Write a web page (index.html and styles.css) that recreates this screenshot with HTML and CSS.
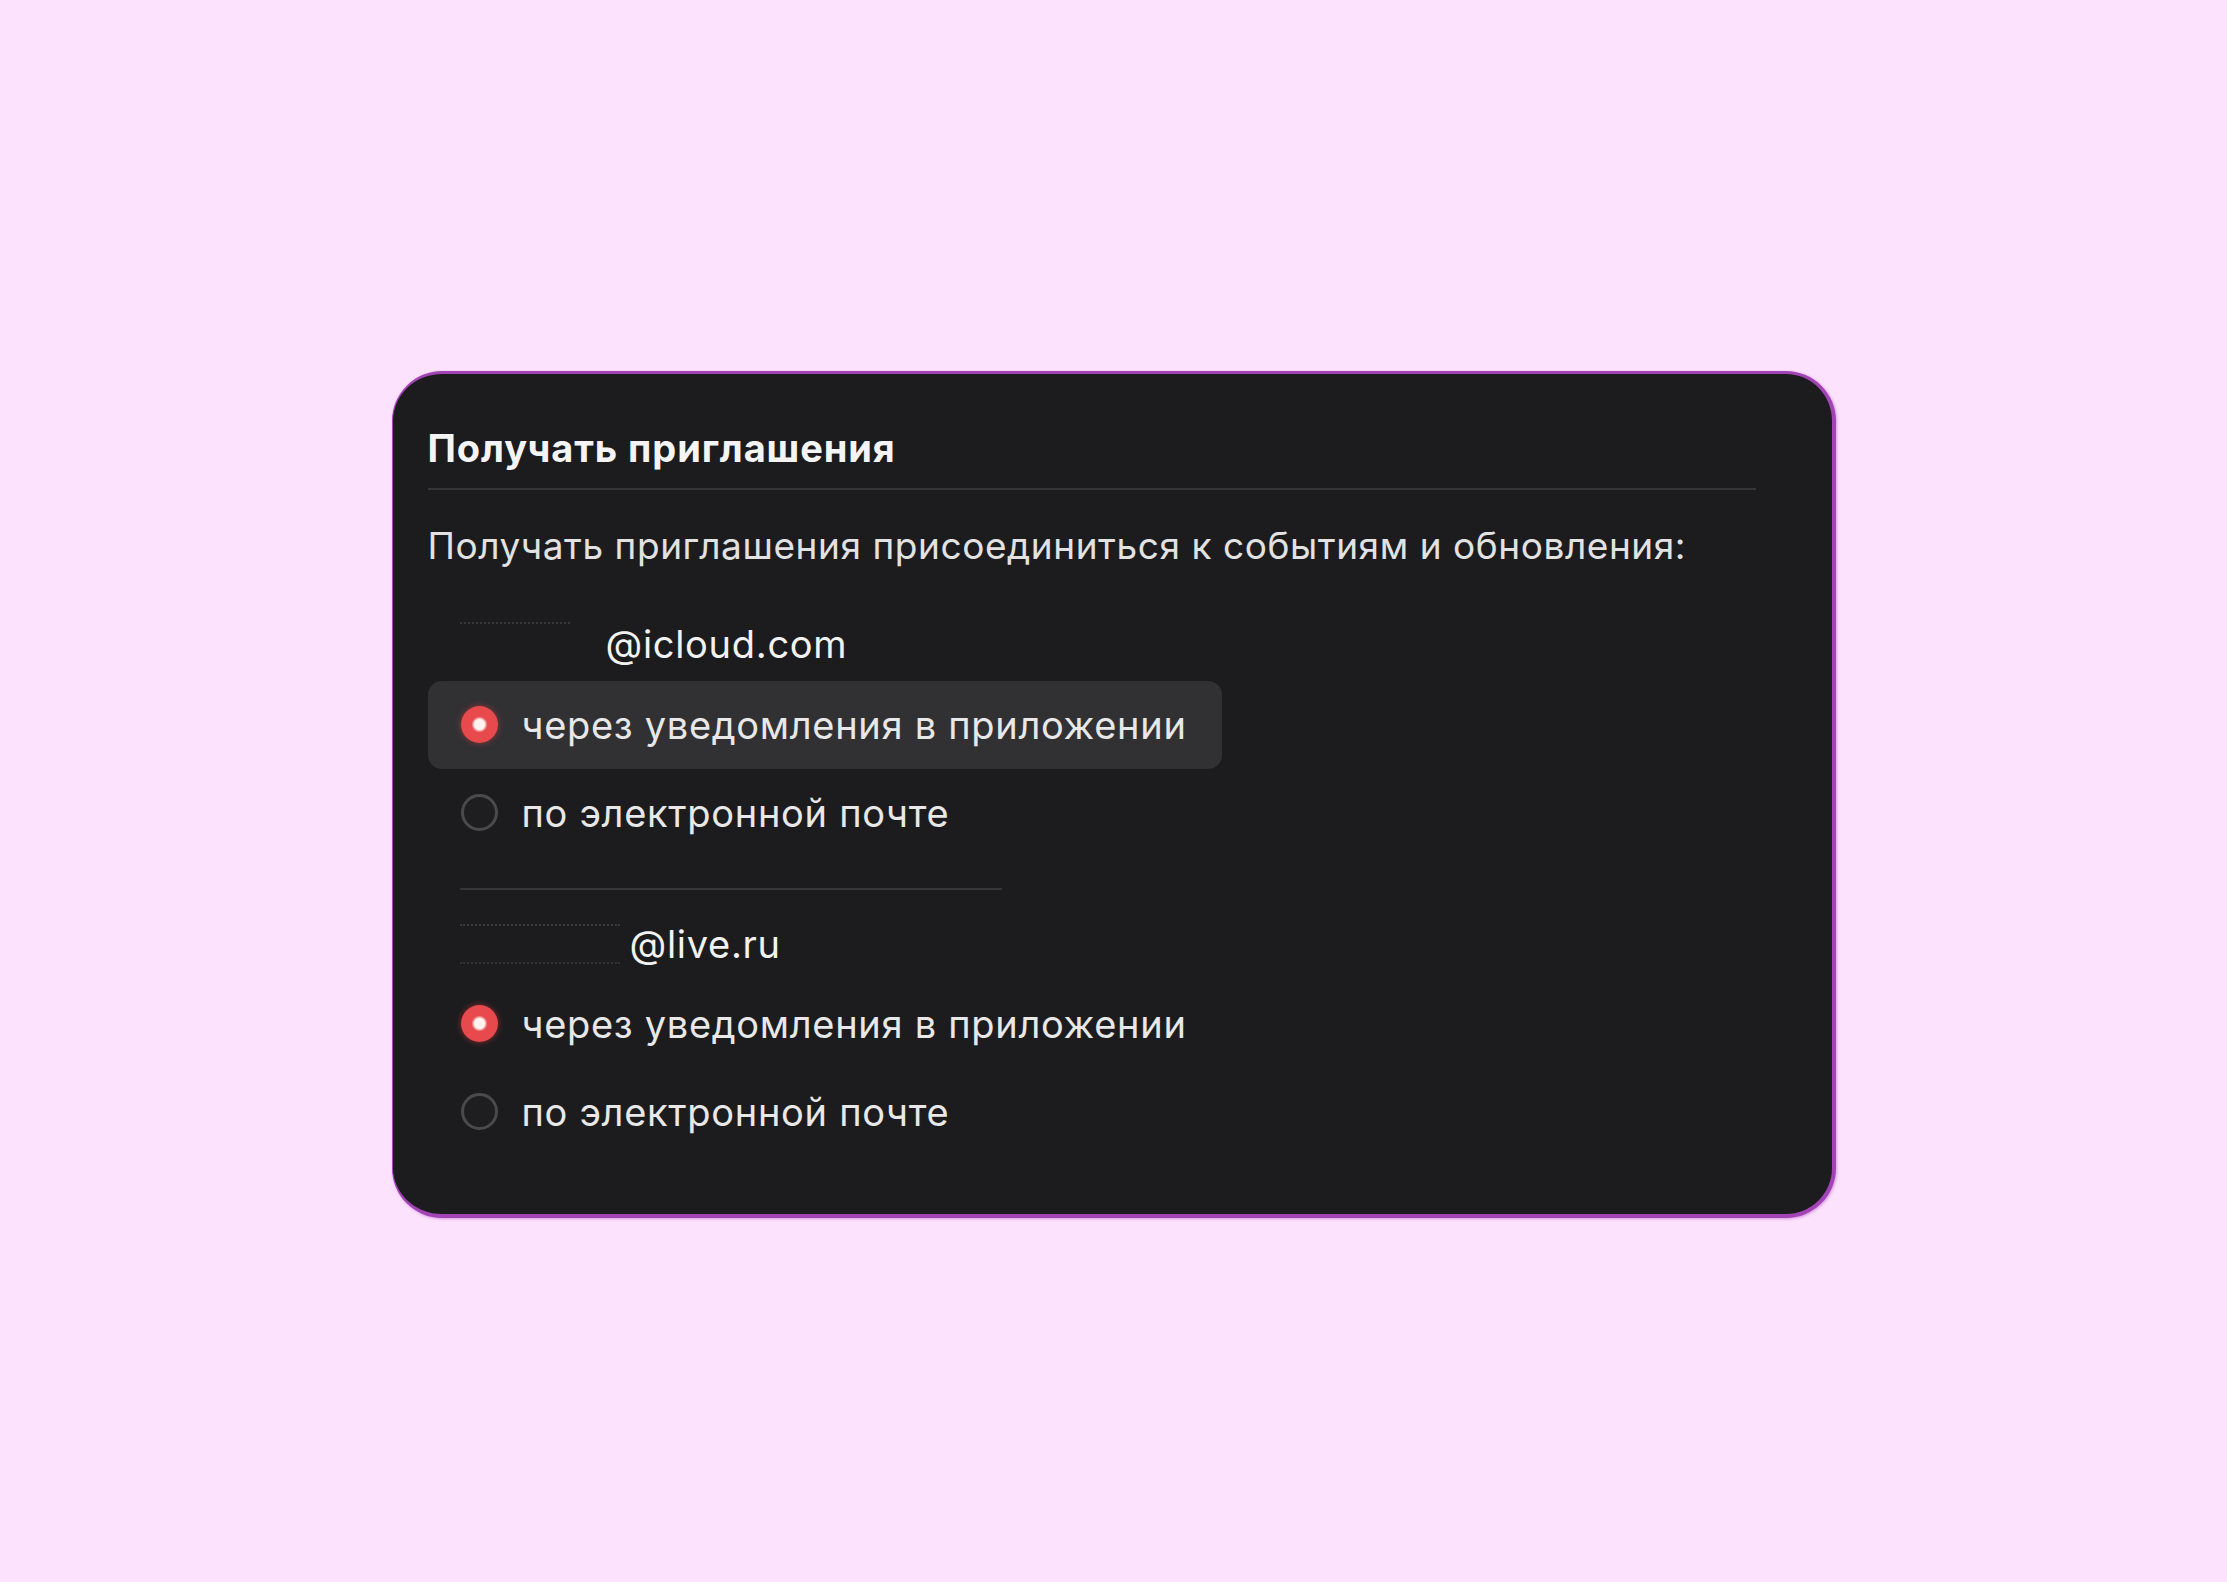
FILE: index.html
```html
<!DOCTYPE html>
<html lang="ru">
<head>
<meta charset="UTF-8" />
<meta name="viewport" content="width=device-width, initial-scale=1" />
<title>Получать приглашения</title>
<link rel="stylesheet" href="styles.css">
</head>
<body>
<div class="card">
  <h2 class="card-title">Получать приглашения</h2>
  <p class="card-text">Получать приглашения присоединиться к событиям и обновления:</p>

  <div class="account">
    <div class="account-name"><span class="account-user user-short"></span>@icloud.com</div>
    <label class="option option-active">
      <input type="radio" name="icloud" checked />
      <span>через уведомления в приложении</span>
    </label>
    <label class="option">
      <input type="radio" name="icloud" />
      <span>по электронной почте</span>
    </label>
  </div>

  <hr class="account-divider" />

  <div class="account account-last">
    <div class="account-name"><span class="account-user user-long"></span>@live.ru</div>
    <label class="option">
      <input type="radio" name="live" checked />
      <span>через уведомления в приложении</span>
    </label>
    <label class="option">
      <input type="radio" name="live" />
      <span>по электронной почте</span>
    </label>
  </div>
</div>
</body>
</html>
```

FILE: styles.css
```css
body {
  box-sizing: border-box;
  margin: 0;
  height: 100vh;
  padding-top: 6px;
  display: flex;
  justify-content: center;
  align-items: center;
  background: #fce2fd;
  font-family: Inter, "Noto Sans", sans-serif;
}
.card {
  box-sizing: border-box;
  width: 1444px;
  padding: 52px 76px 58px 35px;
  background: #1c1c1e;
  border: solid #a244b5;
  border-width: 3px 4px 4px 1px;
  border-radius: 50px;
  box-shadow: 1px 1px 3px rgba(190, 100, 210, 0.6);
  color: #ececec;
}
.card-title {
  margin: 0;
  padding-bottom: 18px;
  border-bottom: 2px solid #353537;
  font-size: 38px;
  font-weight: 700;
  line-height: 44px;
  letter-spacing: 0.9px;
  color: #f4f4f4;
}
.card-text {
  margin: 34px 0 0;
  font-size: 37px;
  line-height: 44px;
  letter-spacing: 0.56px;
  color: #e2e2e2;
}
.account {
  margin-top: 54px;
}
.account-last {
  margin-top: 32px;
}
.account-name {
  display: flex;
  align-items: center;
  padding-left: 32px;
  font-size: 38px;
  line-height: 44px;
  letter-spacing: 0.7px;
  color: #f2f2f2;
}
.account-user {
  height: 40px;
  box-sizing: border-box;
  border-top: 2px dotted rgba(255, 255, 255, 0.13);
}
.user-short {
  width: 110px;
  margin-right: 36px;
  align-self: flex-start;
}
.user-long {
  width: 160px;
  margin-right: 10px;
  border-bottom: 2px dotted rgba(255, 255, 255, 0.1);
}
.option {
  display: flex;
  align-items: center;
  gap: 24px;
  width: max-content;
  height: 88px;
  padding: 0 35px 0 33px;
  border-radius: 14px;
  font-size: 38px;
  letter-spacing: 0.7px;
  color: #e8e8e8;
  cursor: pointer;
}
.account-name + .option {
  margin-top: 15px;
}
.account-last .account-name + .option {
  margin-top: 14px;
}
.option-active {
  background: #313134;
}
.option input {
  appearance: none;
  -webkit-appearance: none;
  box-sizing: border-box;
  width: 37px;
  height: 37px;
  margin: 0;
  border: 3px solid #4a4a4d;
  border-radius: 50%;
  background: #1e1e20;
  flex-shrink: 0;
}
.option input:checked {
  border: none;
  background: radial-gradient(circle, #fff3f0 0 5px, #e8494c 8px);
  box-shadow: 0 0 6px rgba(232, 60, 64, 0.55);
}
.account-divider {
  width: 542px;
  margin: 31px 0 0 32px;
  border: none;
  border-top: 2px solid #363638;
}
```
